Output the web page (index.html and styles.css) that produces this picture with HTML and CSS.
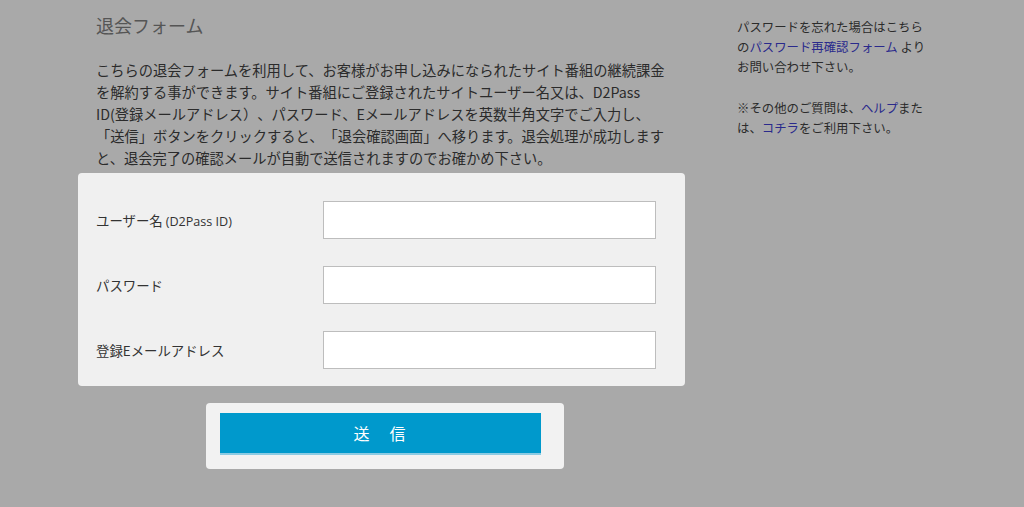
FILE: index.html
```html
<!DOCTYPE html>
<html lang="ja">
<head>
<meta charset="utf-8">
<title>退会フォーム</title>
<link rel="stylesheet" href="styles.css">
</head>
<body>
<div class="page">
  <main class="main">
    <h1 class="title">退会フォーム</h1>
    <p class="intro">こちらの退会フォームを利用して、お客様がお申し込みになられたサイト番組の継続課金<br>を解約する事ができます。サイト番組にご登録されたサイトユーザー名又は、D2Pass<br>ID(登録メールアドレス）、パスワード、Eメールアドレスを英数半角文字でご入力し、<br>「送信」ボタンをクリックすると、「退会確認画面」へ移ります。退会処理が成功します<br>と、退会完了の確認メールが自動で送信されますのでお確かめ下さい。</p>
    <form class="form-panel">
      <div class="row">
        <label class="label" for="user">ユーザー名 <span class="small">(D2Pass ID)</span></label>
        <input class="field" id="user" type="text">
      </div>
      <div class="row">
        <label class="label" for="pass">パスワード</label>
        <input class="field" id="pass" type="password">
      </div>
      <div class="row">
        <label class="label" for="mail">登録Eメールアドレス</label>
        <input class="field" id="mail" type="text">
      </div>
    </form>
    <div class="submit-panel">
      <button class="submit" type="button">送　信</button>
    </div>
  </main>
  <aside class="side">
    <p>パスワードを忘れた場合はこちら<br>の<a href="#">パスワード再確認フォーム</a> より<br>お問い合わせ下さい。</p>
    <p>※その他のご質問は、<a href="#">ヘルプ</a>また<br>は、<a href="#">コチラ</a>をご利用下さい。</p>
  </aside>
</div>
</body>
</html>
```

FILE: styles.css
```css
html, body {
  margin: 0;
  padding: 0;
}
body {
  background: #a9a9a9;
  color: #2b2b2b;
  font-family: "Noto Sans CJK JP", "Noto Sans", sans-serif;
  text-spacing-trim: space-all;
  width: 1024px;
  height: 507px;
  overflow: hidden;
}
.page {
  display: flex;
  padding-left: 78px;
}
.main {
  width: 607px;
  flex: none;
}
.title {
  margin: 13px 0 22px 18px;
  font-size: 18px;
  line-height: 24px;
  font-weight: normal;
  color: #555;
}
.intro {
  margin: 0 0 4px 18px;
  width: 600px;
  white-space: nowrap;
  font-size: 14.25px;
  line-height: 22px;
}
.form-panel {
  background: #f0f0f0;
  border-radius: 4px;
  padding: 28px 29px 17px 18px;
  display: flex;
  flex-direction: column;
  gap: 27px;
}
.row {
  display: flex;
  align-items: center;
}
.label {
  width: 227px;
  flex: none;
  font-size: 13.4px;
  color: #333;
}
.small {
  font-family: "Open Sans", "Noto Sans", sans-serif;
  font-size: 12.6px;
}
.field {
  flex: 1;
  height: 38px;
  box-sizing: border-box;
  border: 1px solid #bdbdbd;
  background: #fff;
  margin: 0;
}
.submit-panel {
  width: 358px;
  box-sizing: border-box;
  margin: 17px 0 0 128px;
  background: #f2f2f2;
  border-radius: 4px;
  padding: 10px 23px 14px 14px;
}
.submit {
  display: block;
  width: 321px;
  height: 42px;
  border: 0;
  border-bottom: 2px solid #8ccbe3;
  background: #0099cc;
  color: #fff;
  font-family: "Noto Sans CJK JP", sans-serif;
  font-size: 16px;
  letter-spacing: 2px;
  padding: 0;
  cursor: pointer;
}
.side {
  margin-left: 52px;
  padding-top: 17px;
  width: 230px;
  white-space: nowrap;
  font-size: 12.4px;
  line-height: 20px;
}
.side p {
  margin: 0 0 21px;
}
.side a {
  color: #2a2a8c;
  text-decoration: none;
}
```
